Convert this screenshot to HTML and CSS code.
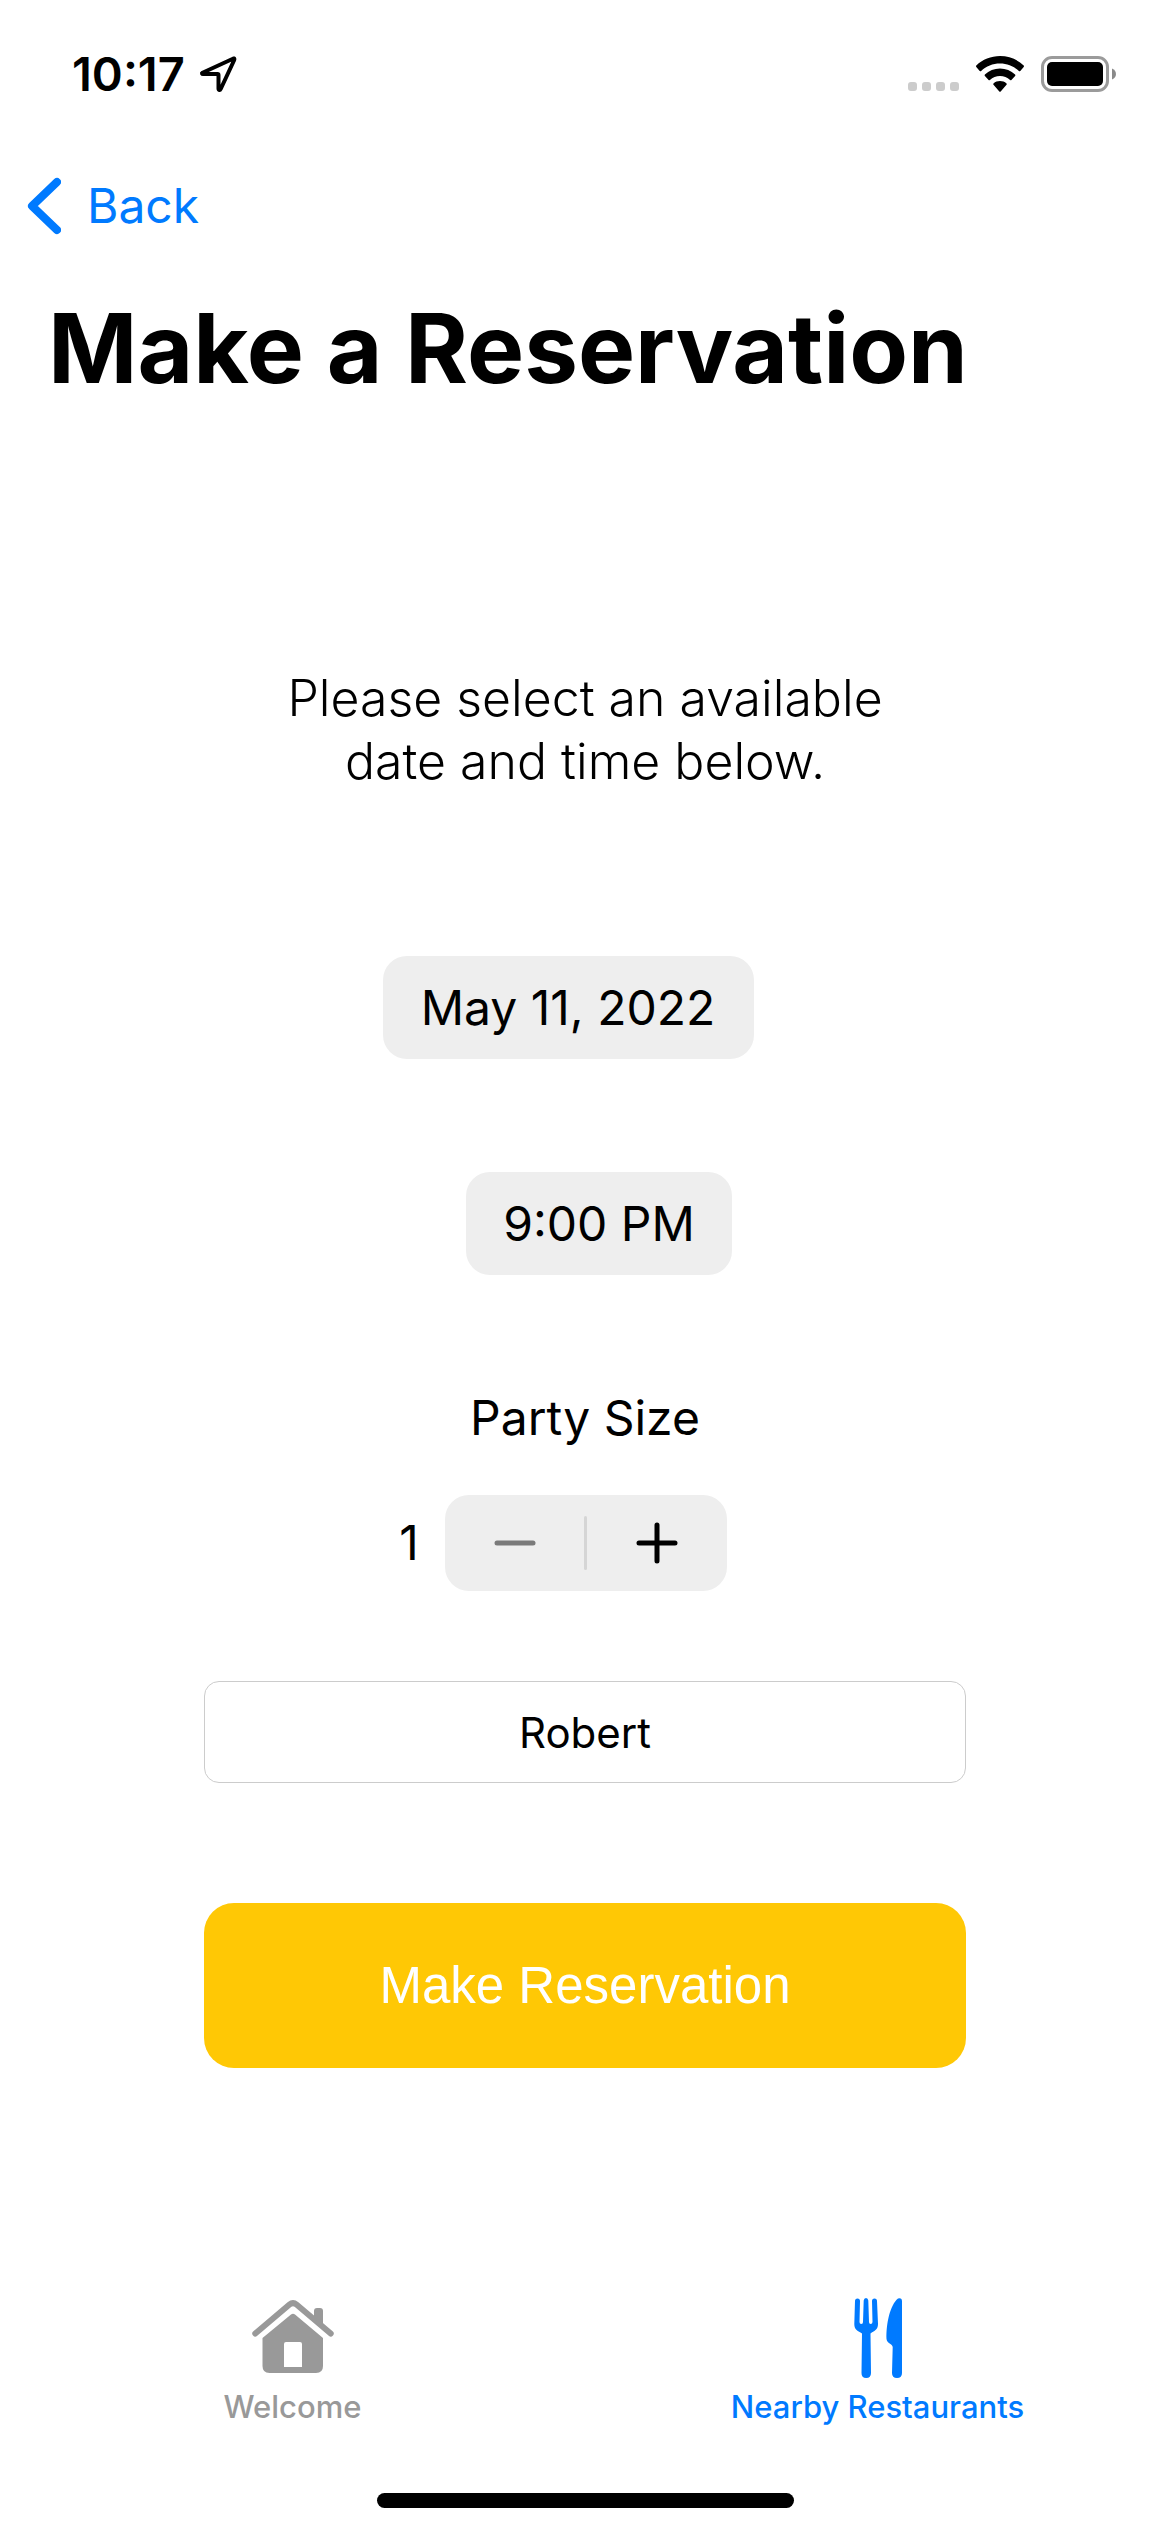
FILE: index.html
```html
<!DOCTYPE html>
<html lang="en">
<head>
<meta charset="utf-8">
<meta name="viewport" content="width=device-width, initial-scale=1">
<title>Make a Reservation</title>
<link rel="stylesheet" href="styles.css">
</head>
<body>
<div class="screen">
  <header>
    <div class="status-bar">
      <div class="status-time">
        <span>10:17</span>
        <svg width="38" height="38" viewBox="0 0 38 38" fill="none" stroke="#000" stroke-width="4" stroke-linejoin="round" aria-hidden="true"><path d="M34.500 3.500L3.500 17.700C2.500 18.300 3 19 4 19H18.500C19.300 19 19.500 19.300 19.500 20V33.500C19.500 35.300 21 35.500 21.700 34L35 5.500C35.600 4 35.500 3.200 34.500 3.500Z"/></svg>
      </div>
      <div class="status-icons">
        <svg width="51" height="36" viewBox="0 0 51 36" fill="#ccc" aria-hidden="true"><rect x="0" y="26" width="9" height="9" rx="3"/><rect x="14" y="26" width="9" height="9" rx="3"/><rect x="28" y="26" width="9" height="9" rx="3"/><rect x="42" y="26" width="9" height="9" rx="3"/></svg>
        <svg width="48" height="36" viewBox="0 0 48 36" aria-hidden="true"><path d="M24 0C33 0 41.500 3.400 47.700 9.500Q48.300 10.200 47.700 10.900L44.300 14.900Q43.600 15.500 42.900 14.900C37.800 10 31.200 7.400 24 7.400S10.200 10 5.100 14.900Q4.400 15.500 3.700 14.900L.3 10.900Q-.3 10.200 .3 9.500C6.500 3.400 15 0 24 0Z"/><path d="M24 12.600C29.800 12.600 35 14.800 39.100 18.600Q39.800 19.300 39.100 20L35.400 24Q34.800 24.600 34.100 24C31.300 21.500 27.800 20.100 24 20.100S16.700 21.500 13.900 24Q13.200 24.600 12.600 24L8.900 20Q8.200 19.300 8.900 18.600C13 14.800 18.200 12.600 24 12.600Z"/><path d="M24 25C26.500 25 28.700 25.800 30.500 27.400Q31.200 28.100 30.500 28.800L24.700 35.500Q24 36.200 23.300 35.500L17.500 28.800Q16.800 28.100 17.500 27.400C19.300 25.800 21.500 25 24 25Z"/></svg>
        <svg width="75" height="36" viewBox="0 0 75 36" aria-hidden="true"><rect x="1.500" y="1.500" width="65" height="33" rx="9.500" fill="none" stroke="#9b9b9b" stroke-width="3"/><rect x="6" y="6" width="56" height="24" rx="5"/><path d="M71 12.500C76.300 14.500 76.300 21.500 71 23.500Z" fill="#8a8a8a"/></svg>
      </div>
    </div>
    <nav class="nav-bar">
      <a class="back" href="#">
        <svg width="34" height="58" viewBox="0 0 34 58" fill="none" stroke="currentColor" stroke-width="8" stroke-linecap="round" stroke-linejoin="round" aria-hidden="true"><path d="M30 5L5 29L30 53"/></svg>
        <span>Back</span>
      </a>
    </nav>
    <h1>Make a Reservation</h1>
  </header>

  <main class="form">
    <p class="prompt">Please select an available<br>date and time below.</p>
    <div class="date-row"><button class="picker date" type="button">May 11, 2022</button></div>
    <div class="time-row"><button class="picker time" type="button">9:00 PM</button></div>
    <h2>Party Size</h2>
    <div class="party-row">
      <output>1</output>
      <div class="stepper">
        <button type="button" aria-label="Decrease" disabled><svg width="42" height="42" viewBox="0 0 42 42" fill="none" stroke="#7a7a7a" stroke-width="5" stroke-linecap="round"><path d="M3 21H39"/></svg></button>
        <span class="divider"></span>
        <button type="button" aria-label="Increase"><svg width="42" height="42" viewBox="0 0 42 42" fill="none" stroke="#000" stroke-width="5" stroke-linecap="round"><path d="M3 21H39M21 3V39"/></svg></button>
      </div>
    </div>
    <input class="name" type="text" value="Robert" aria-label="Name">
    <button class="submit" type="button">Make Reservation</button>
  </main>

  <footer>
    <nav class="tabs">
      <a class="tab" href="#">
        <svg width="82" height="84" viewBox="0 0 82 84" fill="currentColor" aria-hidden="true"><path d="M3.300 36.500L37.500 7.500Q41 4.600 44.500 7.500L78.700 36.500" fill="none" stroke="currentColor" stroke-width="6" stroke-linecap="round"/><path d="M62 22V14Q62 11 65 11H68Q71 11 71 14V30Z"/><path fill-rule="evenodd" d="M39 17.500Q41 16 43 17.500L71 41V69Q71 76 64 76H17.500Q10.500 76 10.500 69V41ZM34 45Q32 45 32 47V70H50V47Q50 45 48 45Z"/></svg>
        <span>Welcome</span>
      </a>
      <a class="tab active" href="#" aria-current="page">
        <svg width="48" height="84" viewBox="0 0 48 84" fill="currentColor" aria-hidden="true"><path d="M1 4Q1 1.500 3.500 1.500T6 4L5.500 25Q5.500 27 7.300 27T9 25L9.700 3.500Q10 1 12 1T14.300 3.500L15 25Q15 27 16.700 27T18.500 25L18 4Q18 1.500 20.500 1.500T23 4L24 27C24 33 20 34 16.500 36.500L17 76Q17 81 12.200 81T7.500 76L8 36.500C4 34 .3 33 .3 27Z"/><path d="M44 1.500Q48 .3 48 4.500V76Q48 81 43 81T38 76L38.700 50C38.500 47 33 46.500 32.500 42C32 27 36 8 44 1.500Z"/></svg>
        <span>Nearby Restaurants</span>
      </a>
    </nav>
    <div class="home-indicator"></div>
  </footer>
</div>
</body>
</html>
```
FILE: styles.css
```css
* { box-sizing: border-box; }

body {
  margin: 0;
  background: #fff;
  color: #000;
  font-family: Inter, "Liberation Sans", sans-serif;
  font-size: 48px;
  line-height: 60px;
}

button, input {
  margin: 0;
  padding: 0;
  border: 0;
  color: inherit;
  font: inherit;
}

a { color: #007aff; text-decoration: none; }
svg { display: block; flex: none; }

.screen {
  display: flex;
  flex-direction: column;
  min-height: 100vh;
}

.status-bar {
  display: flex;
  align-items: center;
  justify-content: space-between;
  height: 148px;
  padding: 0 54px 0 72px;
}

.status-time {
  display: flex;
  align-items: center;
  gap: 14px;
  font-size: 47px;
  font-weight: 600;
}

.status-icons { display: flex; gap: 17px; }

.nav-bar { padding: 28px 27px; }

.back {
  display: inline-flex;
  align-items: center;
  gap: 26px;
}

h1 {
  margin: 0;
  padding: 12px 48px 22px;
  font-size: 96px;
  font-weight: 700;
  line-height: 120px;
}

.form {
  display: flex;
  flex-direction: column;
  align-items: center;
}

.prompt {
  margin: 237px 0 163px;
  font-size: 50px;
  font-weight: 300;
  line-height: 63px;
  text-align: center;
}

.date-row { padding-right: 34px; }
.time-row { padding: 113px 0 113px 28px; }

.picker {
  height: 103px;
  border-radius: 24px;
  background: #eee;
}

.date { width: 371px; }
.time { width: 266px; }

h2 {
  margin: 0;
  font-size: inherit;
  font-weight: 400;
}

.party-row {
  display: flex;
  align-items: center;
  gap: 26px;
  margin: 47px 0 90px;
  padding-right: 44px;
}

.stepper {
  display: flex;
  align-items: center;
  width: 282px;
  height: 96px;
  border-radius: 24px;
  background: #eee;
}

.stepper button {
  display: flex;
  flex: 1;
  align-items: center;
  justify-content: center;
  height: 100%;
  background: none;
}

.divider {
  width: 3px;
  height: 54px;
  border-radius: 2px;
  background: #d5d5d5;
}

.name, .submit { width: calc(100% - 408px); }

.name {
  height: 102px;
  border: 1px solid #ccc;
  border-radius: 15px;
  background: #fff;
  font-size: 42px;
  text-align: center;
}

.submit {
  height: 165px;
  margin: 120px 0;
  border-radius: 30px;
  background: #ffc805;
  color: #fff;
  font-family: "Liberation Sans", sans-serif;
  font-size: 51px;
}

footer { margin-top: auto; padding-bottom: 24px; }

.tabs { display: grid; grid-template-columns: 1fr 1fr; }

.tab {
  display: flex;
  flex-direction: column;
  align-items: center;
  gap: 8px;
  color: #999;
  font-size: 31px;
  font-weight: 500;
  line-height: 36px;
}

.active { color: #007aff; }

.home-indicator {
  width: 417px;
  height: 15px;
  margin: 68px auto 0;
  border-radius: 8px;
  background: #000;
}
```
